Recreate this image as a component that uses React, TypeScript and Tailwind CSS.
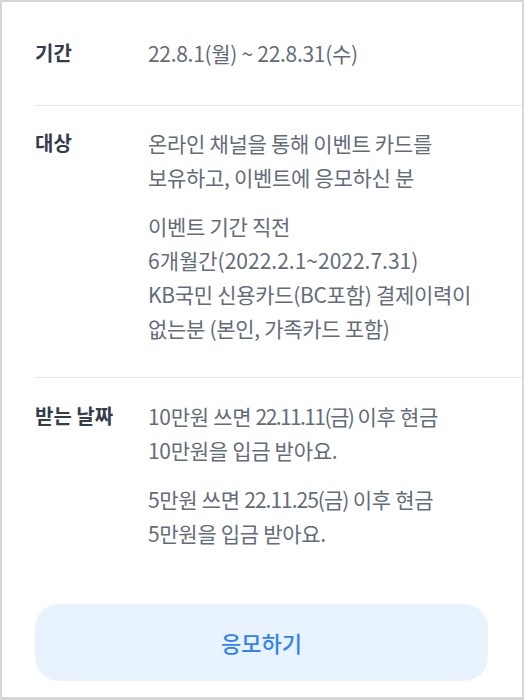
import React from "react";

const font = { fontFamily: '"Noto Sans CJK KR", "Noto Sans", sans-serif' };

function Row({
  label,
  children,
  className,
}: {
  label: string;
  children: React.ReactNode;
  className: string;
}) {
  return (
    <div className={`flex border-b border-[#e5e8eb] pr-[34px] ${className}`}>
      <div className="w-[113px] shrink-0 text-[20px] font-bold leading-[34px] text-[#333d4b]">
        {label}
      </div>
      <div className="flex-1 text-[21px] leading-[34px] text-[#636c79] tracking-[-0.3px]">
        {children}
      </div>
    </div>
  );
}

export default function App() {
  return (
    <div
      className="h-[700px] w-[524px] border-2 border-b-[3px] border-[#d6d6d6] bg-white pl-[33px] flex flex-col"
      style={font}
    >
      <Row label="기간" className="pt-[34px] pb-[35px]">
        <p>22.8.1(월) ~ 22.8.31(수)</p>
      </Row>
      <Row label="대상" className="pt-[20px] pb-[32px]">
        <p>
          온라인 채널을 통해 이벤트 카드를
          <br />
          보유하고, 이벤트에 응모하신 분
        </p>
        <p className="mt-[15px]">
          이벤트 기간 직전
          <br />
          <span className="tracking-normal">6개월간(2022.2.1~2022.7.31)</span>
          <br />
          KB국민 신용카드(BC포함) 결제이력이
          <br />
          없는분 (본인, 가족카드 포함)
        </p>
      </Row>
      <div className="flex pr-[34px] pt-[21px]">
        <div className="w-[113px] shrink-0 text-[20px] font-bold leading-[34px] text-[#333d4b]">
          받는 날짜
        </div>
        <div className="flex-1 text-[21px] leading-[34px] text-[#636c79] tracking-[-0.3px]">
          <p>
            10만원 쓰면 <span className="tracking-[-1.6px]">22.11.11(금)</span> 이후 현금
            <br />
            10만원을 입금 받아요.
          </p>
          <p className="mt-[15px]">
            5만원 쓰면 <span className="tracking-[-1px]">22.11.25(금)</span> 이후 현금
            <br />
            5만원을 입금 받아요.
          </p>
        </div>
      </div>
      <div className="pr-[34px] mt-[54px]">
        <button className="flex h-[77px] w-full items-center justify-center rounded-[24px] bg-[#e8f3ff] text-[22px] font-medium text-[#3182f6]">
          응모하기
        </button>
      </div>
    </div>
  );
}
